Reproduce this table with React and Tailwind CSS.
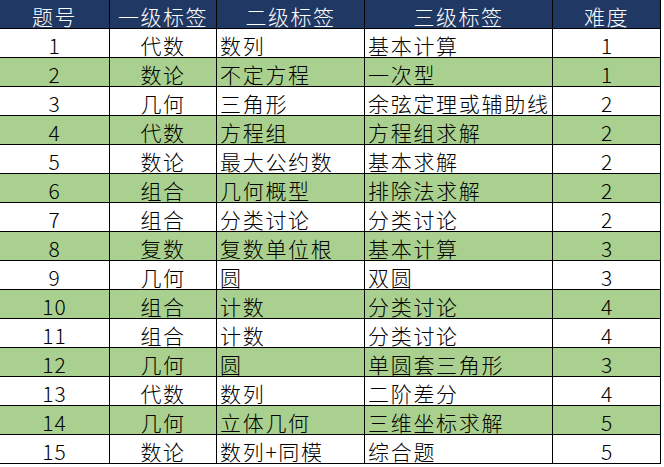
const rows = [
  ["1", "代数", "数列", "基本计算", "1"],
  ["2", "数论", "不定方程", "一次型", "1"],
  ["3", "几何", "三角形", "余弦定理或辅助线", "2"],
  ["4", "代数", "方程组", "方程组求解", "2"],
  ["5", "数论", "最大公约数", "基本求解", "2"],
  ["6", "组合", "几何概型", "排除法求解", "2"],
  ["7", "组合", "分类讨论", "分类讨论", "2"],
  ["8", "复数", "复数单位根", "基本计算", "3"],
  ["9", "几何", "圆", "双圆", "3"],
  ["10", "组合", "计数", "分类讨论", "4"],
  ["11", "组合", "计数", "分类讨论", "4"],
  ["12", "几何", "圆", "单圆套三角形", "3"],
  ["13", "代数", "数列", "二阶差分", "4"],
  ["14", "几何", "立体几何", "三维坐标求解", "5"],
  ["15", "数论", "数列+同模", "综合题", "5"],
];

const cols = "grid grid-cols-[110px_107px_148px_188px_108px]";
const cell = "h-[29px] border-r border-b border-black flex items-end pb-[1px] leading-none";

export default function App() {
  return (
    <div className="w-[664px] h-[467px] bg-white text-[21px] font-light text-black font-['Liberation_Sans_Narrow','Noto_Sans_CJK_SC',sans-serif]">
      <div className={cols + " w-[661px]"}>
        {["题号", "一级标签", "二级标签", "三级标签", "难度"].map((h) => (
          <div key={h} className={cell + " justify-center bg-[#1f3864] text-white tracking-[1.5px]"}>
            {h}
          </div>
        ))}
        {rows.map((r, i) => {
          const bg = i % 2 === 1 ? "bg-[#a9d08e]" : "bg-white";
          return [
            <div key={r[0] + "a"} className={`${cell} ${bg} justify-center tracking-[1px]`}>{r[0]}</div>,
            <div key={r[0] + "b"} className={`${cell} ${bg} justify-center tracking-[1.5px]`}>{r[1]}</div>,
            <div key={r[0] + "c"} className={`${cell} ${bg} pl-[3px] tracking-[1.7px]`}>{r[2]}</div>,
            <div key={r[0] + "d"} className={`${cell} ${bg} pl-[3px] tracking-[1.7px]`}>{r[3]}</div>,
            <div key={r[0] + "e"} className={`${cell} ${bg} justify-center`}>{r[4]}</div>,
          ];
        })}
      </div>
    </div>
  );
}
